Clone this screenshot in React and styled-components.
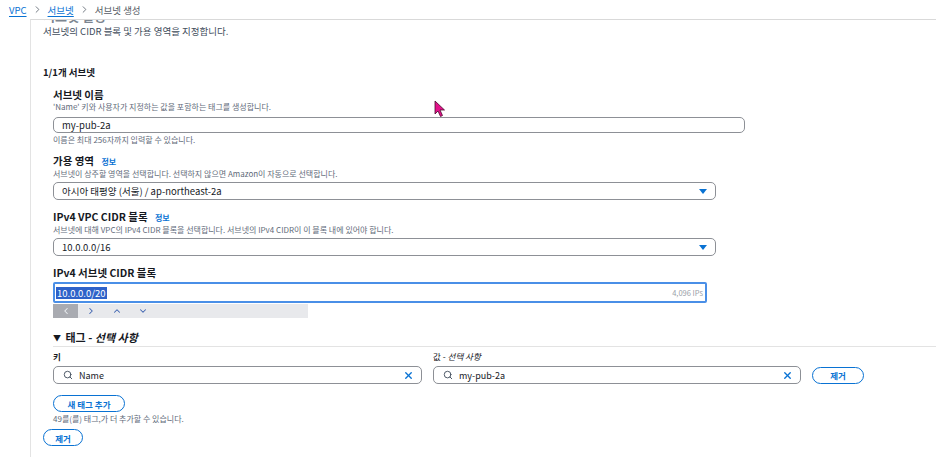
import React from 'react'
import styled, { createGlobalStyle } from 'styled-components'
import { ChevronRight, ChevronLeft, ChevronUp, ChevronDown, Search, X } from 'lucide-react'

const GlobalStyle = createGlobalStyle`
  html, body {
    margin: 0;
    padding: 0;
    background: #ffffff;
  }
  body {
    width: 936px;
    height: 457px;
    overflow: hidden;
    font-family: "Noto Sans CJK KR", "Noto Sans", sans-serif;
    color: #16191f;
  }
  * { box-sizing: border-box; }
`

export default function App() {
  return (
    <Page>
      <GlobalStyle />
      <Breadcrumb>
        <Crumb href="#">VPC</Crumb>
        <ChevronRight size={11} color="#687078" strokeWidth={2} />
        <Crumb href="#">서브넷</Crumb>
        <ChevronRight size={11} color="#687078" strokeWidth={2} />
        <Current>서브넷 생성</Current>
      </Breadcrumb>

      <Body>
        <Gutter />
        <Panel>
          <CutHeading><span>서브넷 설정</span></CutHeading>
          <Intro>서브넷의 CIDR 블록 및 가용 영역을 지정합니다.</Intro>

          <Count>1/1개 서브넷</Count>

          <Fields>
            <Label $top={10}>서브넷 이름</Label>
            <Desc>'Name' 키와 사용자가 지정하는 값을 포함하는 태그를 생성합니다.</Desc>
            <TextBox $w={692}>my-pub-2a</TextBox>
            <Help>이름은 최대 256자까지 입력할 수 있습니다.</Help>

            <Label $top={10}>가용 영역 <Info>정보</Info></Label>
            <Desc>서브넷이 상주할 영역을 선택합니다. 선택하지 않으면 Amazon이 자동으로 선택합니다.</Desc>
            <SelectBox>
              <span>아시아 태평양 (서울) / ap-northeast-2a</span>
              <Caret />
            </SelectBox>

            <Label $top={11}>IPv4 VPC CIDR 블록 <Info>정보</Info></Label>
            <Desc>서브넷에 대해 VPC의 IPv4 CIDR 블록을 선택합니다. 서브넷의 IPv4 CIDR이 이 블록 내에 있어야 합니다.</Desc>
            <SelectBox>
              <span>10.0.0.0/16</span>
              <Caret />
            </SelectBox>

            <Label $top={11}>IPv4 서브넷 CIDR 블록</Label>
            <FocusBox>
              <Selected>10.0.0.0/20</Selected>
              <Hint>4,096 IPs</Hint>
            </FocusBox>
            <FindBar>
              <FindCell $active><ChevronLeft size={10} strokeWidth={2.5} /></FindCell>
              <FindCell><ChevronRight size={10} strokeWidth={2.5} /></FindCell>
              <FindCell><ChevronUp size={10} strokeWidth={2.5} /></FindCell>
              <FindCell><ChevronDown size={10} strokeWidth={2.5} /></FindCell>
            </FindBar>

            <TagHeader>
              <span>▼</span> 태그 - <em>선택 사항</em>
            </TagHeader>

            <TagGrid>
              <ColLabel><b>키</b></ColLabel>
              <ColLabel>값 - <em>선택 사항</em></ColLabel>
              <span />
              <TagInput>
                <Search size={10} color="#414d5c" strokeWidth={2.2} />
                <TagText>Name</TagText>
                <X size={11} color="#0972d3" strokeWidth={3} />
              </TagInput>
              <TagInput>
                <Search size={10} color="#414d5c" strokeWidth={2.2} />
                <TagText>my-pub-2a</TagText>
                <X size={11} color="#0972d3" strokeWidth={3} />
              </TagInput>
              <PillButton $w={52}>제거</PillButton>
            </TagGrid>

            <PillButton $w={72} $top={11}>새 태그 추가</PillButton>
            <Help>49를(를) 태그,가 더 추가할 수 있습니다.</Help>
          </Fields>

          <PillButton $w={40} $top={5}>제거</PillButton>
        </Panel>
      </Body>

      <Cursor viewBox="0 0 12 18" width="12" height="18">
        <path d="M1 1 L1 14 L4 11 L6.5 16.5 L8.5 15.5 L6 10 L10.5 10 Z" fill="#e3128a" stroke="#4a0a2e" strokeWidth="0.8" strokeLinejoin="round" />
      </Cursor>
    </Page>
  )
}

const Page = styled.div`
  position: relative;
  width: 936px;
  height: 457px;
  overflow: hidden;
`

const Breadcrumb = styled.div`
  height: 19px;
  display: flex;
  align-items: center;
  gap: 5px;
  padding-left: 9px;
  font-size: 9.5px;
`

const Crumb = styled.a`
  color: #0972d3;
  text-decoration: underline;
  text-underline-offset: 2px;
`

const Current = styled.span`
  color: #545b64;
`

const Body = styled.div`
  display: flex;
  height: 438px;
`

const Gutter = styled.div`
  width: 30px;
  flex-shrink: 0;
`

const Panel = styled.div`
  flex: 1;
  border-top: 1px solid #d9d9d9;
  border-left: 1px solid #e3e3e3;
  padding-left: 12px;
  overflow: hidden;
`

const CutHeading = styled.div`
  height: 4px;
  overflow: hidden;
  display: flex;
  align-items: flex-end;
  span {
    font-size: 13px;
    line-height: 16px;
    font-weight: 700;
    color: #7d8690;
    white-space: nowrap;
  }
`

const Intro = styled.div`
  margin-top: 1px;
  font-size: 9.5px;
  line-height: 12px;
  color: #414d5c;
`

const Count = styled.div`
  margin-top: 28px;
  font-size: 9.5px;
  line-height: 14px;
  font-weight: 700;
`

const Fields = styled.div`
  padding-left: 10px;
`

const Label = styled.div`
  margin-top: ${p => p.$top || 0}px;
  font-size: 10.5px;
  line-height: 12px;
  font-weight: 700;
  color: #16191f;
`

const Info = styled.span`
  margin-left: 5px;
  font-size: 8px;
  font-weight: 600;
  color: #0972d3;
`

const Desc = styled.div`
  margin-top: 1px;
  font-size: 8px;
  line-height: 10px;
  color: #5f6b7a;
`

const Help = styled(Desc)`
  margin-top: 2px;
`

const TextBox = styled.div`
  margin-top: 5px;
  width: ${p => p.$w}px;
  height: 16px;
  border: 1px solid #8d9096;
  border-radius: 5px;
  padding-left: 8px;
  display: flex;
  align-items: center;
  font-size: 9.5px;
`

const SelectBox = styled(TextBox)`
  margin-top: 3px;
  width: 663px;
  height: 18px;
  justify-content: space-between;
  padding-right: 8px;
`

const Caret = styled.span`
  width: 0;
  height: 0;
  border-left: 4px solid transparent;
  border-right: 4px solid transparent;
  border-top: 5px solid #0972d3;
`

const FocusBox = styled.div`
  margin-top: 3px;
  width: 654px;
  height: 21px;
  border: 2px solid #4a8fe7;
  border-radius: 2px;
  display: flex;
  align-items: center;
  justify-content: space-between;
  padding: 0 2px 0 1px;
`

const Selected = styled.span`
  background: #2e62c9;
  color: #ffffff;
  font-size: 9.5px;
  line-height: 12px;
  padding: 0 1px;
`

const Hint = styled.span`
  font-size: 7.5px;
  color: #9aa0a8;
`

const FindBar = styled.div`
  margin-top: 1px;
  width: 255px;
  height: 14px;
  background: #e8e9ec;
  display: flex;
`

const FindCell = styled.div`
  width: 25px;
  height: 14px;
  display: flex;
  align-items: center;
  justify-content: center;
  background: ${p => (p.$active ? '#a9abb1' : 'transparent')};
  color: ${p => (p.$active ? '#eef0f3' : '#3d63b0')};
  margin-right: ${p => (p.$active ? 0 : 1)}px;
`

const TagHeader = styled.div`
  margin-top: 12px;
  font-size: 11px;
  line-height: 14px;
  font-weight: 700;
  color: #16191f;
  border-bottom: 1px solid #e3e3e3;
  padding-bottom: 1px;
  span {
    font-size: 8px;
    vertical-align: 1px;
    margin-right: 2px;
  }
  em {
    font-weight: 600;
  }
`

const TagGrid = styled.div`
  margin-top: 4px;
  display: grid;
  grid-template-columns: 369px 368px auto;
  column-gap: 11px;
  row-gap: 5px;
  align-items: center;
  justify-items: start;
`

const ColLabel = styled.div`
  font-size: 8.5px;
  line-height: 10px;
  color: #16191f;
`

const TagInput = styled.div`
  width: 100%;
  height: 18px;
  border: 1px solid #8d9096;
  border-radius: 5px;
  display: flex;
  align-items: center;
  padding: 0 7px 0 9px;
  gap: 6px;
`

const TagText = styled.span`
  flex: 1;
  font-size: 9px;
`

const PillButton = styled.div`
  margin-top: ${p => p.$top || 0}px;
  width: ${p => p.$w}px;
  height: 17px;
  border: 1.5px solid #0972d3;
  border-radius: 9px;
  display: flex;
  align-items: center;
  justify-content: center;
  font-size: 8.5px;
  font-weight: 700;
  color: #0972d3;
`

const Cursor = styled.svg`
  position: absolute;
  left: 434px;
  top: 100px;
`
